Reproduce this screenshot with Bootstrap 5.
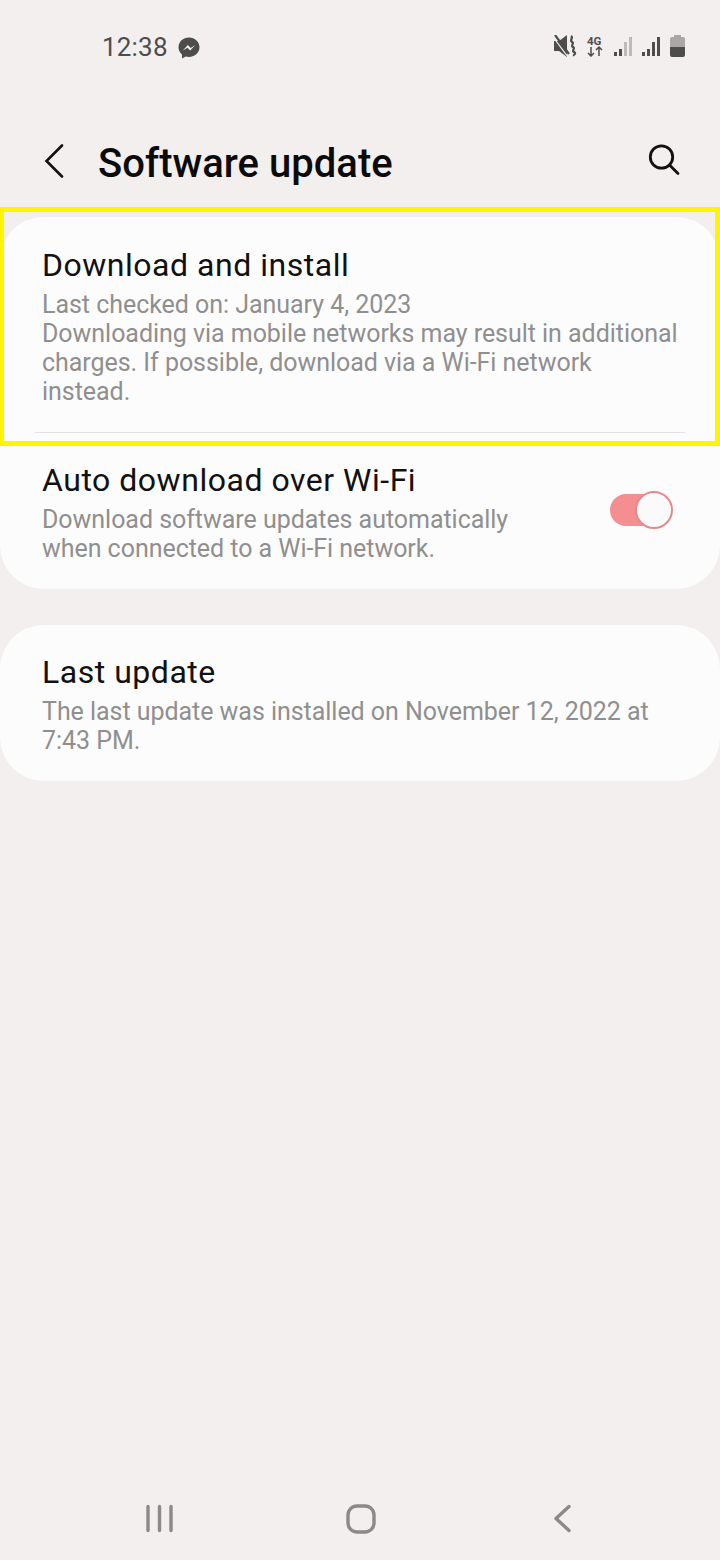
<!doctype html>
<html lang="en">
<head>
<meta charset="utf-8">
<title>Software update</title>
<link href="https://cdn.jsdelivr.net/npm/bootstrap@5.3.0/dist/css/bootstrap.min.css" rel="stylesheet">
<style>
html,body{height:1560px;margin:0;overflow:hidden}
body{background:#f2efee;font-family:Roboto,"Liberation Sans",sans-serif;width:720px;position:relative}
.stat{height:95px;padding:32px 35px 0 102px;color:#4d4d4d}
.stat-time{font-size:26px;line-height:30px;letter-spacing:.2px;margin-right:9px}
.stat-right{margin-left:auto;margin-top:3px}
.gap-a{margin-right:10px}
.gap-b{margin-right:11px}
.gap-c{margin-right:10px}
.head{height:122px;padding:16px 40px 0 44px}
.head-title{font-size:40px;font-weight:500;color:#0b0b0b;line-height:46px;margin:0 0 0 34px;letter-spacing:.03px}
.head-ico{margin-top:-6px}
.head-ico-s{margin-top:-8px}
.tile{background:#fdfcfc;border-radius:44px;margin-bottom:36px}
.entry{padding:27px 36px 0 42px}
.entry-a{height:215px}
.entry-b{height:156px;padding-top:26px;padding-right:42px}
.rule{height:1px;background:#e3e1e0;margin:0 35px}
.ttl{font-size:32px;line-height:42px;color:#111;letter-spacing:.52px}
.sub{font-size:25px;line-height:29px;color:#8f8f8f;letter-spacing:-.04px;margin-top:4px}
.tog{width:62px;height:32px;border-radius:16px;background:#f48e90;position:relative;margin:-28px 6px 0 26px;flex:none}
.knob{position:absolute;right:-1px;top:-3px;width:38px;height:38px;border-radius:50%;background:#fbfafa;border:2px solid #e58a8c}
.tile-last{height:156px;padding-top:26px}
.mark-box{position:absolute;left:0;top:207px;width:720px;height:239px;border:5px solid #fff500;border-left-width:4px;pointer-events:none}
.nav-bar{position:absolute;left:0;right:0;bottom:0;height:80px;padding:23px 0 0 145px}
.nav-home{margin-left:170px}
.nav-back{margin-left:173px}
</style>
</head>
<body>
<div class="stat d-flex align-items-start">
  <span class="stat-time">12:38</span>
  <svg width="24" height="24" viewBox="0 0 24 24" class="mt-1"><path fill="#4d4d4d" d="M12 1.500C6 1.500 1.500 5.800 1.500 11.300c0 3 1.300 5.500 3.500 7.200v4l3.700-2c1 .3 2.100.4 3.300.4 6 0 10.500-4.300 10.500-9.600S18 1.500 12 1.500z"/><path fill="#f2efee" d="M5.800 14.600l5.100-5.500 2.800 2.800 4.600-2.800-5.100 5.500-2.700-2.800z"/></svg>
  <div class="stat-right d-flex align-items-center">
    <svg class="gap-a" width="23" height="22" viewBox="0 0 23 22"><path fill="#4d4d4d" d="M0 6h5l8-6v22l-8-6H0z"/><path stroke="#f2efee" stroke-width="1.200" d="M-1 2l15 20" fill="none"/><path stroke="#4d4d4d" stroke-width="2.200" d="M1 0l14 19" fill="none"/><path stroke="#4d4d4d" stroke-width="2.200" fill="none" d="M17 1c3 2-2 4 1 6s-2 3 1 5-2 3 1 5-1 2 0 4"/></svg>
    <svg class="gap-b" width="16" height="22" viewBox="0 0 16 22"><text x="0" y="9.500" font-size="11.500" font-weight="700" fill="#4d4d4d" font-family="Roboto, sans-serif">4G</text><path stroke="#4d4d4d" stroke-width="1.500" fill="none" d="M4 12v9M1 18l3 3 3-3M12 21v-9M9 15l3-3 3 3"/></svg>
    <svg class="gap-c" width="18" height="21" viewBox="0 0 18 21"><rect x="0" y="16" width="3" height="4" fill="#4d4d4d"/><rect x="5" y="13" width="3" height="7" fill="#4d4d4d"/><rect x="10" y="6" width="3" height="14" fill="#bdbbba"/><rect x="15" y="1" width="3" height="19" fill="#bdbbba"/></svg>
    <svg class="gap-c" width="18" height="21" viewBox="0 0 18 21"><rect x="0" y="16" width="3" height="4" fill="#4d4d4d"/><rect x="5" y="13" width="3" height="7" fill="#4d4d4d"/><rect x="10" y="6" width="3" height="14" fill="#4d4d4d"/><rect x="15" y="1" width="3" height="19" fill="#4d4d4d"/></svg>
    <svg width="15" height="22" viewBox="0 0 15 22"><path fill="#aaa8a7" d="M4 2V0h7v2h2a2 2 0 0 1 2 2v8H0V4a2 2 0 0 1 2-2z"/><path fill="#4d4d4d" d="M0 12h15v8a2 2 0 0 1-2 2H2a2 2 0 0 1-2-2z"/></svg>
  </div>
</div>
<header class="head d-flex align-items-center">
  <svg class="head-ico" width="20" height="34" viewBox="0 0 20 34"><path d="M18 1.500 2.500 17 18 32.500" fill="none" stroke="#111" stroke-width="2.600" stroke-linecap="round"/></svg>
  <h1 class="head-title">Software update</h1>
  <svg class="ms-auto head-ico-s" width="32" height="32" viewBox="0 0 32 32"><circle cx="13.500" cy="13" r="11.200" fill="none" stroke="#111" stroke-width="2.800"/><path d="M21.500 21l8.500 8.500" stroke="#111" stroke-width="2.800" stroke-linecap="round"/></svg>
</header>
<main>
  <section class="tile">
    <div class="entry entry-a">
      <div class="ttl">Download and install</div>
      <div class="sub">Last checked on: January 4, 2023<br>Downloading via mobile networks may result in additional charges. If possible, download via a Wi-Fi network instead.</div>
    </div>
    <div class="rule"></div>
    <div class="entry entry-b d-flex align-items-center">
      <div class="flex-grow-1 align-self-start">
        <div class="ttl">Auto download over Wi-Fi</div>
        <div class="sub">Download software updates automatically<br>when connected to a Wi-Fi network.</div>
      </div>
      <div class="tog"><span class="knob"></span></div>
    </div>
  </section>
  <section class="tile tile-last entry">
    <div class="ttl">Last update</div>
    <div class="sub">The last update was installed on November 12, 2022 at 7:43 PM.</div>
  </section>
</main>
<div class="mark-box"></div>
<nav class="nav-bar d-flex align-items-start">
  <svg width="30" height="30" viewBox="0 0 30 30"><path d="M3 3.500v24M14.500 3.500v24M26 3.500v24" stroke="#8c8989" stroke-width="3.400" stroke-linecap="round"/></svg>
  <svg class="nav-home" width="32" height="32" viewBox="0 0 32 32"><rect x="3" y="3" width="26" height="26" rx="9" fill="none" stroke="#8c8989" stroke-width="3.400"/></svg>
  <svg class="nav-back" width="24" height="30" viewBox="0 0 24 30"><path d="M19 3.500 6 15.500l13 12" fill="none" stroke="#8c8989" stroke-width="3.400" stroke-linecap="round" stroke-linejoin="round"/></svg>
</nav>
</body>
</html>
